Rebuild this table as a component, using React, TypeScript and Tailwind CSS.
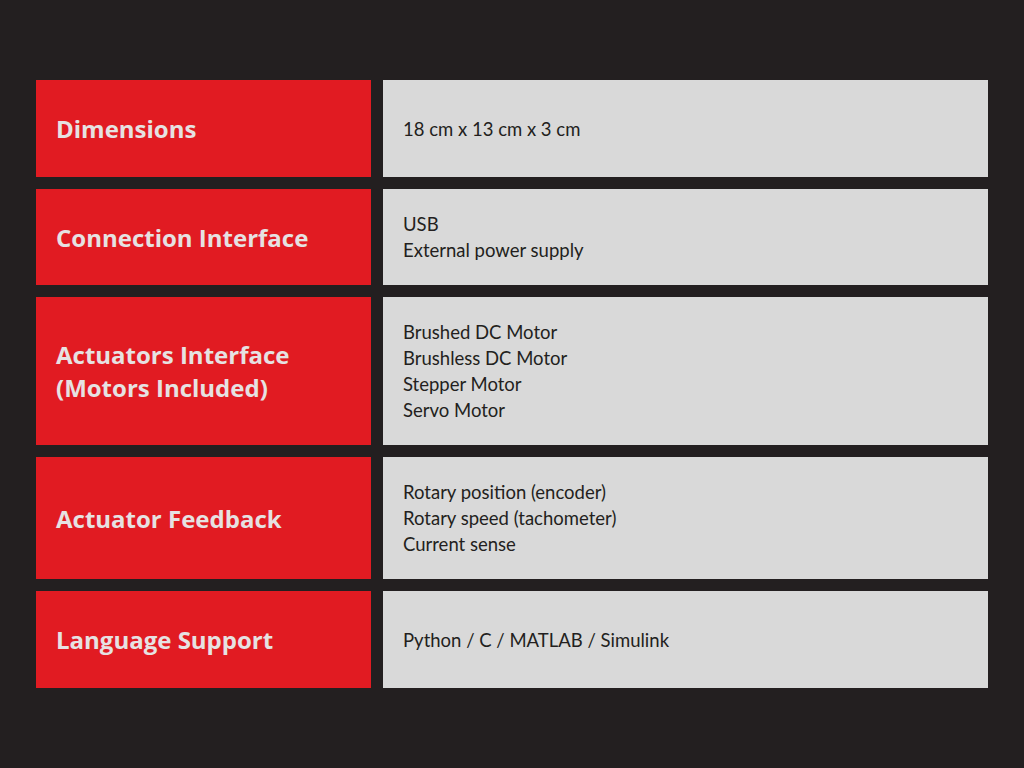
const specs = [
  { label: ["Dimensions"], values: ["18 cm x 13 cm x 3 cm"], h: "h-[97px]" },
  { label: ["Connection Interface"], values: ["USB", "External power supply"], h: "h-[96px]" },
  {
    label: ["Actuators Interface", "(Motors Included)"],
    values: ["Brushed DC Motor", "Brushless DC Motor", "Stepper Motor", "Servo Motor"],
    h: "h-[148px]",
  },
  {
    label: ["Actuator Feedback"],
    values: ["Rotary position (encoder)", "Rotary speed (tachometer)", "Current sense"],
    h: "h-[122px]",
  },
  { label: ["Language Support"], values: ["Python / C / MATLAB / Simulink"], h: "h-[97px]" },
];

export default function App() {
  return (
    <div className="w-[1024px] h-[768px] bg-[#231f20] pt-[80px] pl-[36px]">
      <div className="flex flex-col gap-[12px] w-[952px]">
        {specs.map((row) => (
          <div key={row.label[0]} className={`flex gap-[12px] ${row.h}`}>
            {/* Label */}
            <div className="w-[335px] bg-[#e11b22] flex flex-col justify-center px-[20px] font-['Open_Sans',sans-serif] font-bold text-[24px] leading-[33px] text-[#e6e2e2]">
              {row.label.map((l) => (
                <div key={l}>{l}</div>
              ))}
            </div>
            {/* Values */}
            <div className="flex-1 bg-[#d9d9d9] flex flex-col justify-center px-[20px] font-['Lato',sans-serif] text-[18.5px] leading-[26px] text-[#231f20]">
              {row.values.map((v) => (
                <div key={v}>{v}</div>
              ))}
            </div>
          </div>
        ))}
      </div>
    </div>
  );
}
